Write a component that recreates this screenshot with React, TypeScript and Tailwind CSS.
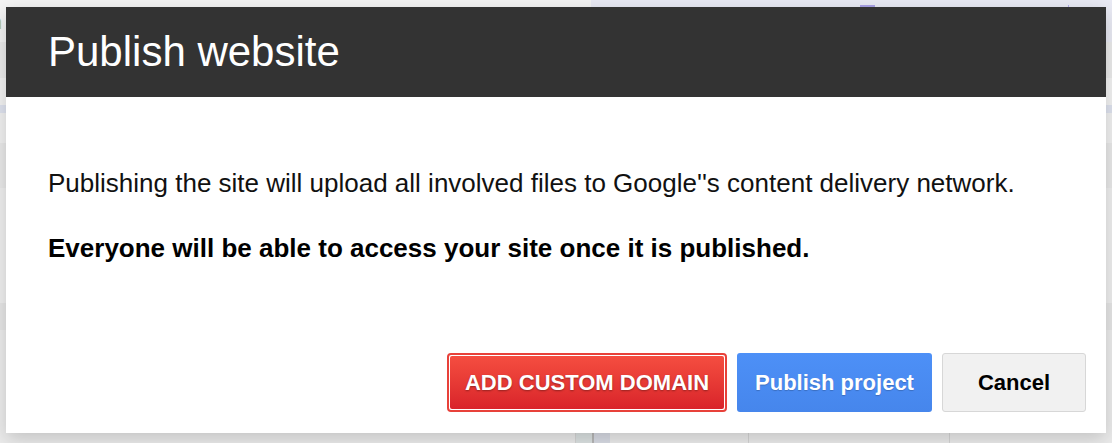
import React from "react";

export default function App() {
  return (
    <div
      className="relative w-[1112px] h-[443px] overflow-hidden bg-[#ececec]"
      style={{ fontFamily: '"Liberation Sans", Arial, sans-serif' }}
    >
      {/* page behind the modal */}
      <div className="flex flex-col w-full h-full">
        <div className="flex h-[33px]">
          <div className="w-[600px] bg-[#f4f4f4] text-[#b7c48f] text-[20px] leading-[33px] -ml-[9px] pt-[6px]">
            n
          </div>
          <div className="flex-1 bg-[#e9eaf4] flex items-start pt-[5px]">
            <div className="ml-[269px] w-[15px] h-[2px] bg-[#a9a1e6]" />
            <div className="ml-[193px] w-[1px] h-[3px] bg-[#b3acec]" />
          </div>
        </div>
        <div className="flex h-[9px]">
          <div className="w-[600px] bg-[#f4f4f4]" />
          <div className="flex-1 bg-[#e9eaf4]" />
        </div>
        <div className="h-[36px] bg-[#ebebeb]" />
        <div className="flex h-[27px]">
          <div className="flex-1 bg-[#f3f3f3]" />
        </div>
        <div className="h-[8px] bg-[#dfe3ef]" />
        <div className="h-[30px] bg-[#f1f1f1]" />
        <div className="h-[45px] bg-[#e9e9e9]" />
        <div className="h-[115px] bg-[#efefef]" />
        <div className="h-[27px] bg-[#e6e6e6]" />
        <div className="flex-1 bg-[#ececec] flex">
          <div className="w-[575px]" />
          <div className="w-[1px] bg-[#d6d6d6]" />
          <div className="w-[16px] bg-[#dde3e3]" />
          <div className="w-[2px] bg-[#b9b9b9]" />
          <div className="w-[16px] bg-[#dadde6]" />
          <div className="w-[138px]" />
          <div className="w-[1px] bg-[#d6d6d6]" />
          <div className="w-[200px]" />
          <div className="w-[1px] bg-[#d6d6d6]" />
        </div>
      </div>

      {/* modal dialog */}
      <div className="absolute left-[6px] top-[7px] w-[1100px] h-[426px] bg-white flex flex-col shadow-[0_6px_18px_rgba(0,0,0,0.18)]">
        <div className="h-[90px] bg-[#333333] flex items-center pl-[42px]">
          <h1 className="text-white text-[42px] leading-[42px] font-normal">Publish website</h1>
        </div>
        <div className="flex-1 flex flex-col pl-[42px] pr-[20px]">
          <p className="mt-[73px] text-[26px] leading-[26px] text-[#111]">
            Publishing the site will upload all involved files to Google''s content delivery network.
          </p>
          <p className="mt-[39px] text-[26px] leading-[26px] font-bold text-black">
            Everyone will be able to access your site once it is published.
          </p>
          <div className="mt-auto mb-[21px] flex justify-end gap-[10px]">
            <button className="w-[280px] h-[59px] rounded-[4px] border-[2px] border-[#e8413a] bg-white p-[1px]">
              <span className="flex w-full h-full items-center justify-center rounded-[2px] bg-gradient-to-b from-[#f54d40] to-[#d9222a] text-white text-[22px] font-bold [text-shadow:0_1px_2px_rgba(0,0,0,0.35)]">
                ADD CUSTOM DOMAIN
              </span>
            </button>
            <button className="w-[195px] h-[59px] rounded-[3px] bg-gradient-to-b from-[#4d90f7] to-[#4686ec] text-white text-[22px] font-bold [text-shadow:0_1px_1px_rgba(0,0,0,0.2)]">
              Publish project
            </button>
            <button className="w-[144px] h-[59px] rounded-[3px] border border-[#d7d7d7] bg-[#f1f1f1] text-black text-[22px] font-bold">
              Cancel
            </button>
          </div>
        </div>
      </div>
    </div>
  );
}
